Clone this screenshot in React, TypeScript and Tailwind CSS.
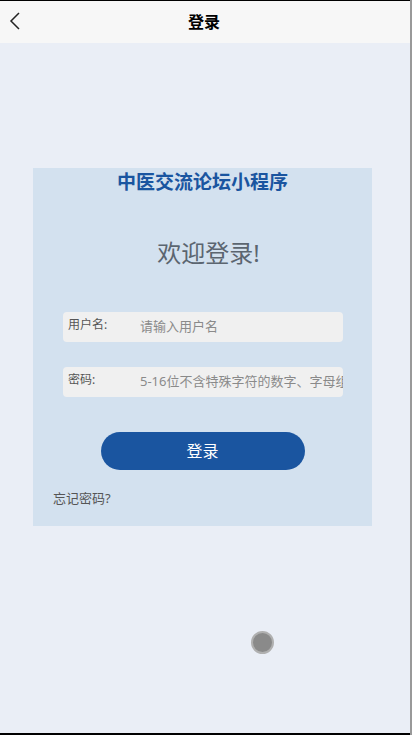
import React from "react";

export default function App() {
  return (
    <div
      className="relative w-[412px] h-[735px] overflow-hidden bg-[#eaeef6] flex flex-col"
      style={{ fontFamily: '"Noto Sans", "Noto Sans CJK SC", sans-serif' }}
    >
      <div className="h-[1px] bg-black" />
      <div className="h-[42px] bg-[#f7f7f7] flex items-center relative">
        <svg className="absolute left-[9px] top-[11px]" width="12" height="18" viewBox="0 0 12 18">
          <path d="M10 1 L2 9 L10 17" fill="none" stroke="#222" strokeWidth="1.5" />
        </svg>
        <div className="flex-1 text-center text-[16px] font-bold text-black pr-[4px]">登录</div>
      </div>
      <div className="flex-1 flex flex-col items-center">
        <div className="mt-[125px] ml-[-7px] w-[339px] h-[358px] bg-[#d3e1ef] flex flex-col items-center">
          <div className="mt-[1px] text-[19px] font-bold leading-[26px] text-[#1a55a0]">中医交流论坛小程序</div>
          <div className="mt-[43px] ml-[12px] text-[24px] leading-[30px] text-[#5b6570]">欢迎登录!</div>
          <div className="mt-[44px] w-[280px] h-[30px] bg-[#f0f0f0] rounded-[4px] flex items-center ml-[30px] self-start overflow-hidden">
            <span className="w-[77px] shrink-0 pl-[5px] text-[12px] text-[#555] mt-[-4px]">用户名:</span>
            <span className="text-[13px] text-[#8a8a8a] whitespace-nowrap overflow-hidden">请输入用户名</span>
          </div>
          <div className="mt-[25px] w-[280px] h-[30px] bg-[#f0f0f0] rounded-[4px] flex items-center ml-[30px] self-start overflow-hidden">
            <span className="w-[77px] shrink-0 pl-[5px] text-[12px] text-[#555] mt-[-4px]">密码:</span>
            <span className="text-[13px] text-[#8a8a8a] whitespace-nowrap overflow-hidden">5-16位不含特殊字符的数字、字母组合</span>
          </div>
          <div className="mt-[35px] w-[204px] h-[38px] rounded-full bg-[#1a55a0] flex items-center justify-center text-white text-[16px]">登录</div>
          <div className="mt-[19px] self-start ml-[20px] text-[13px] text-[#555]">忘记密码?</div>
        </div>
      </div>
      <div className="absolute left-[251px] top-[631px] w-[23px] h-[23px] rounded-full bg-[#8a8a8a] border-2 border-[#b0b0b0]" />
      <div className="absolute right-0 top-0 w-[2px] h-full bg-[#999]" />
      <div className="h-[2px] bg-black" />
    </div>
  );
}
